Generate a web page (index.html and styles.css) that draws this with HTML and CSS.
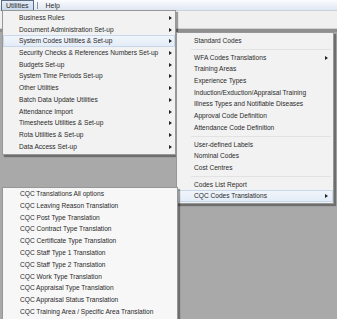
FILE: index.html
```html
<!DOCTYPE html>
<html lang="en">
<head>
  <meta charset="UTF-8">
  <title>Utilities menu</title>
  <link rel="stylesheet" href="styles.css">
</head>
<body>
  <div class="menubar">
    <span class="top-item active">Utilities</span>
    <span class="bar-sep"></span>
    <span class="top-item">Help</span>
  </div>
  <div class="toolbar"></div>
  <div class="workspace"></div>

  <ul class="menu menu-main">
    <li>Business Rules<i class="arrow"></i></li>
    <li>Document Administration Set-up<i class="arrow"></i></li>
    <li class="hot">System Codes Utilities &amp; Set-up<i class="arrow"></i></li>
    <li>Security Checks &amp; References Numbers Set-up<i class="arrow"></i></li>
    <li>Budgets Set-up<i class="arrow"></i></li>
    <li>System Time Periods Set-up<i class="arrow"></i></li>
    <li>Other Utilities<i class="arrow"></i></li>
    <li>Batch Data Update Utilities<i class="arrow"></i></li>
    <li>Attendance Import<i class="arrow"></i></li>
    <li>Timesheets Utilities &amp; Set-up<i class="arrow"></i></li>
    <li>Rota Utilities &amp; Set-up<i class="arrow"></i></li>
    <li>Data Access Set-up<i class="arrow"></i></li>
  </ul>

  <ul class="menu menu-codes">
    <li>Standard Codes</li>
    <li class="sep"></li>
    <li>WFA Codes Translations<i class="arrow"></i></li>
    <li>Training Areas</li>
    <li>Experience Types</li>
    <li>Induction/Exduction/Appraisal Training</li>
    <li>Illness Types and Notifiable Diseases</li>
    <li>Approval Code Definition</li>
    <li>Attendance Code Definition</li>
    <li class="sep"></li>
    <li>User-defined Labels</li>
    <li>Nominal Codes</li>
    <li>Cost Centres</li>
    <li class="sep"></li>
    <li>Codes List Report</li>
    <li class="hot">CQC Codes Translations<i class="arrow"></i></li>
  </ul>

  <ul class="menu menu-cqc">
    <li>CQC Translations All options</li>
    <li>CQC Leaving Reason Translation</li>
    <li>CQC Post Type Translation</li>
    <li>CQC Contract Type Translation</li>
    <li>CQC Certificate Type Translation</li>
    <li>CQC Staff Type 1 Translation</li>
    <li>CQC Staff Type 2 Translation</li>
    <li>CQC Work Type Translation</li>
    <li>CQC Appraisal Type Translation</li>
    <li>CQC Appraisal Status Translation</li>
    <li>CQC Training Area / Specific Area Translation</li>
  </ul>
</body>
</html>
```

FILE: styles.css
```css
html, body {
  margin: 0;
  height: 100%;
}
body {
  font-family: 'Liberation Sans', Arial, sans-serif;
  font-size: 6.6px;
  color: #2a2a2a;
  background: #a9a9a9;
  position: relative;
  overflow: hidden;
}
.menubar {
  height: 10px;
  display: flex;
  align-items: center;
  padding-left: 1px;
  background: linear-gradient(#fbfcfe, #dfe7f2);
  border-bottom: 1px solid #c9d3e0;
  font-size: 7px;
}
.top-item {
  height: 9px;
  line-height: 9px;
  padding: 0 4px;
  border: 1px solid transparent;
}
.top-item.active {
  background: linear-gradient(#e4ecf7, #c9d9ee);
  border-color: #5a6a80;
}
.bar-sep {
  width: 1px;
  height: 7px;
  background: #8a95a5;
  margin: 0 3px;
}
.toolbar {
  height: 17px;
  background: #f0f0f0;
  border-bottom: 1px solid #d0d0d0;
}
.workspace {
  border-top: 3px solid #8f8f8f;
}
.menu {
  position: absolute;
  list-style: none;
  margin: 0;
  padding: 0;
  background: #f2f2f2;
  border: 1px solid #979797;
  box-shadow: 2px 2px 1px rgba(0, 0, 0, 0.35);
}
.menu li {
  position: relative;
  height: 11.7px;
  line-height: 11.7px;
  padding-left: 16px;
  white-space: nowrap;
  box-sizing: border-box;
}
.menu li.hot {
  background: linear-gradient(#f2f6fb, #e2ebf7);
  outline: 1px solid #c7d7ec;
  outline-offset: -1px;
}
.menu li.sep {
  height: 5px;
}
.menu li.sep::after {
  content: "";
  position: absolute;
  left: 14px;
  right: 2px;
  top: 2px;
  border-top: 1px solid #e2e2e2;
}
.arrow {
  position: absolute;
  right: 3px;
  top: 4px;
  border-left: 3px solid #222;
  border-top: 2px solid transparent;
  border-bottom: 2px solid transparent;
}
.menu-main {
  left: 2px;
  top: 10px;
  width: 172px;
  padding: 1px 0 2px;
}
.menu-codes {
  left: 176px;
  top: 32px;
  width: 156px;
  padding: 2px 0 1px;
}
.menu-codes li {
  padding-left: 17px;
}
.menu-codes .arrow {
  right: 5px;
}
.menu-cqc {
  left: 2px;
  top: 187px;
  width: 174px;
  padding: 0 0 1px;
  background: #f7f7f7;
}
.menu-cqc li {
  height: 11.8px;
  line-height: 11.8px;
  padding-left: 17px;
}
```
